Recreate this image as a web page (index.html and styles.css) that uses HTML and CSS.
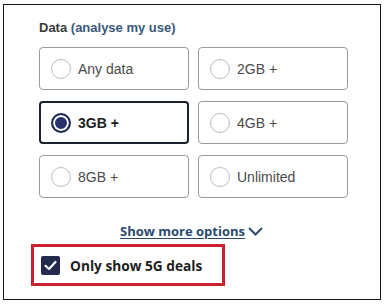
FILE: index.html
```html
<!DOCTYPE html>
<html>
<head>
<meta charset="utf-8">
<link rel="stylesheet" href="styles.css">
</head>
<body>
<div class="frame">
  <div class="heading">Data <span class="analyse">(analyse my use)</span></div>
  <div class="grid">
    <div class="card"><span class="radio"></span><span class="label">Any data</span></div>
    <div class="card"><span class="radio"></span><span class="label">2GB +</span></div>
    <div class="card selected"><span class="radio"></span><span class="label">3GB +</span></div>
    <div class="card"><span class="radio"></span><span class="label">4GB +</span></div>
    <div class="card"><span class="radio"></span><span class="label">8GB +</span></div>
    <div class="card"><span class="radio"></span><span class="label">Unlimited</span></div>
  </div>
  <div class="more">
    <span class="more-link">Show more options</span>
    <svg class="chev" width="15" height="9" viewBox="0 0 15 9"><path d="M1 1 L7.5 7.5 L14 1" fill="none" stroke="#2c4a6e" stroke-width="2"/></svg>
  </div>
  <div class="fiveg">
    <span class="check"><svg width="19" height="19" viewBox="0 0 19 19"><path d="M4.5 9.8 L8 13 L14.5 6" fill="none" stroke="#fff" stroke-width="2.2" stroke-linecap="round" stroke-linejoin="round"/></svg></span>
    <span class="fiveg-text">Only show 5G deals</span>
  </div>
</div>
</body>
</html>
```
FILE: styles.css
```css
html, body {
  margin: 0;
  background: #fff;
}
.frame {
  box-sizing: border-box;
  width: 378px;
  height: 296px;
  margin: 4px 0 0 3px;
  border: 1px solid #1a1a1a;
  padding: 15px 0 0 27px;
  font-family: "Liberation Sans", Arial, sans-serif;
}
.heading {
  margin-left: 8px;
  font-size: 13px;
  line-height: 16px;
  font-weight: bold;
  color: #3a3a3a;
  margin-bottom: 11px;
}
.analyse {
  color: #3b5779;
}
.grid {
  margin-left: 8px;
  display: grid;
  grid-template-columns: 150px 150px;
  grid-auto-rows: 43px;
  column-gap: 9px;
  row-gap: 11px;
}
.card {
  box-sizing: border-box;
  border: 1px solid #9a9a9a;
  border-radius: 4px;
  display: flex;
  align-items: center;
  padding-left: 11px;
  font-size: 14px;
  color: #4a4a4a;
}
.radio {
  box-sizing: border-box;
  width: 20px;
  height: 20px;
  border: 1px solid #bdbdbd;
  border-radius: 50%;
  margin-right: 7px;
  flex: none;
}
.card.selected {
  border: 2px solid #1c2130;
  padding-left: 10px;
  color: #1e1e1e;
  font-weight: bold;
}
.card.selected .radio {
  border: 2px solid #1f2a55;
  background: #27336a;
  box-shadow: inset 0 0 0 2px #fff;
}
.more {
  margin-top: 24px;
  display: flex;
  align-items: center;
  padding-left: 89px;
  gap: 3px;
  font-family: "Open Sans", sans-serif;
  font-weight: bold;
  font-size: 13px;
  line-height: 18px;
  color: #2c4a6e;
}
.more-link {
  text-decoration: underline;
  text-underline-offset: 2px;
}
.chev {
  margin-top: 1px;
}
.fiveg {
  box-sizing: border-box;
  margin-top: 4px;
  width: 194px;
  height: 42px;
  border: 3px solid #c8202f;
  display: flex;
  align-items: center;
  padding-left: 7px;
  gap: 10px;
}
.check {
  width: 19px;
  height: 19px;
  border-radius: 2px;
  background: #232a4e;
  display: flex;
  flex: none;
}
.fiveg-text {
  font-family: "Open Sans", sans-serif;
  font-weight: bold;
  font-size: 13.7px;
  color: #1e1e1e;
}
```
